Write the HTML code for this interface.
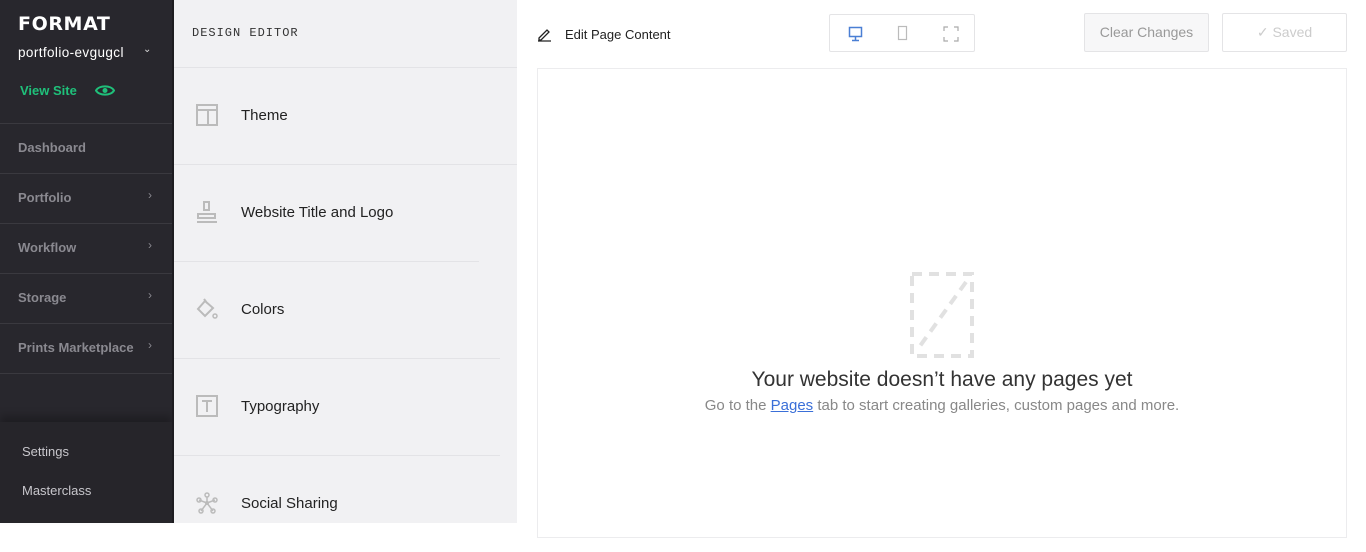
<!DOCTYPE html>
<html><head><style>
*{margin:0;padding:0;box-sizing:border-box}
body{width:1366px;height:523px;overflow:hidden;font-family:"Liberation Sans",sans-serif;background:#fff;position:relative}
.sb{position:absolute;left:0;top:0;width:172px;height:523px;background:#28272d}
.logo{position:absolute;left:18px;top:13px;color:#fff;font-family:"DejaVu Sans",sans-serif;font-weight:bold;font-size:19px;letter-spacing:0.6px}
.site{position:absolute;left:18px;top:45px;color:#fff;font-size:13.5px;letter-spacing:0.4px}
.chev{position:absolute;left:143px;top:44px;color:#ddd;font-size:10px}
.vs{position:absolute;left:20px;top:83px;color:#1fc07a;font-weight:bold;font-size:13px}
.mi{position:absolute;left:0;width:172px;height:50px;border-top:1px solid #3a393f;color:#8a8990;font-size:13px;font-weight:bold;padding:16px 18px}
.mi span{position:absolute;right:20px;top:14px;font-weight:normal;font-size:12px}
.bot{position:absolute;left:0;top:422px;width:172px;height:101px;background:#26252a;box-shadow:0 -6px 8px rgba(0,0,0,.25)}
.bot div{position:absolute;left:22px;color:#c8c7cc;font-size:13px}
.de{position:absolute;left:172px;top:0;width:345px;height:523px;background:#f1f1f3;border-left:2px solid #1d1c20}
.det{position:absolute;left:18px;top:26px;font-family:"Liberation Mono",monospace;font-size:12px;color:#333;letter-spacing:1px}
.row{position:absolute;left:0;width:343px;height:97px;border-top:1px solid #e3e3e6}
.row .t{position:absolute;left:67px;top:38px;font-size:15px;color:#222}
.row svg{position:absolute;left:22px;top:36px}
.top{position:absolute;font-size:13px;color:#222}
.btn{position:absolute;border:1px solid #e4e4e6;border-radius:2px;background:#fff}
.canvas{position:absolute;left:537px;top:68px;width:810px;height:470px;border:1px solid #ececee}
</style></head><body>
<div class="sb">
<div class="logo">FORMAT</div>
<div class="site">portfolio-evgugcl</div><div class="chev">&#8964;</div>
<div class="vs">View Site</div>
<svg style="position:absolute;left:95px;top:84px" width="20" height="13" viewBox="0 0 20 13"><path d="M1 6.5C4 1 16 1 19 6.5C16 12 4 12 1 6.5Z" fill="none" stroke="#1fc07a" stroke-width="2"/><circle cx="10" cy="6.5" r="2.5" fill="#1fc07a"/></svg>
<div class="mi" style="top:123px">Dashboard</div>
<div class="mi" style="top:173px">Portfolio<span>›</span></div>
<div class="mi" style="top:223px">Workflow<span>›</span></div>
<div class="mi" style="top:273px">Storage<span>›</span></div>
<div class="mi" style="top:323px">Prints Marketplace<span>›</span></div>
<div class="mi" style="top:373px;height:1px;padding:0"></div>
<div class="bot"><div style="top:22px">Settings</div><div style="top:61px">Masterclass</div></div>
</div>
<div class="de">
<div class="det">DESIGN EDITOR</div>
<div class="row" style="top:67px"><svg width="22" height="22"><rect x="1" y="1" width="20" height="20" fill="none" stroke="#bbb" stroke-width="2"/><path d="M1 6H21M12 6V21" stroke="#bbb" stroke-width="2"/></svg><div class="t" style="top:39px">Theme</div></div>
<div class="row" style="top:164px"><svg width="22" height="22"><path d="M8 1H13V9H8Z M2 13H19V17H2Z M1 21H21" fill="none" stroke="#bbb" stroke-width="2"/></svg><div class="t" style="top:39px">Website Title and Logo</div></div>
<div class="row" style="top:261px;width:305px"><svg width="22" height="22"><path d="M9 3L17 10L9 18L2 11Z M8 1L11 5" fill="none" stroke="#bbb" stroke-width="2"/><circle cx="19" cy="18" r="2" fill="none" stroke="#bbb" stroke-width="1.5"/></svg><div class="t" style="top:39px">Colors</div></div>
<div class="row" style="top:358px;width:326px"><svg width="22" height="22"><rect x="1" y="1" width="20" height="20" fill="none" stroke="#bbb" stroke-width="2"/><path d="M6 6H16M11 6V17" stroke="#bbb" stroke-width="2"/></svg><div class="t" style="top:39px">Typography</div></div>
<div class="row" style="top:455px;width:326px"><svg width="22" height="22"><circle cx="11" cy="11" r="2" fill="#bbb"/><g fill="none" stroke="#bbb" stroke-width="1.5"><circle cx="11" cy="3" r="2"/><circle cx="3" cy="8" r="2"/><circle cx="19" cy="8" r="2"/><circle cx="5" cy="19" r="2"/><circle cx="17" cy="19" r="2"/><path d="M11 5V11L3 8M11 11L19 8M11 11L5 19M11 11L17 19"/></g></svg><div class="t" style="top:39px">Social Sharing</div></div>
</div>
<svg style="position:absolute;left:537px;top:27px" width="15" height="15"><path d="M2 11L10 3L12 5L4 13H2Z M1 14H14" fill="none" stroke="#222" stroke-width="1.3"/></svg>
<div class="top" style="left:565px;top:27px">Edit Page Content</div>
<div class="btn" style="left:829px;top:14px;width:146px;height:38px">
<svg style="position:absolute;left:18px;top:11px" width="16" height="16"><rect x="1.5" y="1.5" width="12" height="9" fill="none" stroke="#4a7fd4" stroke-width="1.5"/><path d="M7.5 11V14M4 14.5H11" stroke="#4a7fd4" stroke-width="1.5"/></svg>
<svg style="position:absolute;left:67px;top:10px" width="12" height="17"><rect x="1.5" y="1.5" width="8" height="13" fill="none" stroke="#bbb" stroke-width="1.2"/></svg>
<svg style="position:absolute;left:113px;top:11px" width="16" height="16" stroke="#aaa" stroke-width="1.2" fill="none"><path d="M1 5V1H5M11 1H15V5M1 11V15H5M11 15H15V11"/></svg>
</div>
<div class="btn" style="left:1084px;top:13px;width:125px;height:39px;background:#f7f7f8;color:#999;font-size:14px;text-align:center;line-height:37px">Clear Changes</div>
<div class="btn" style="left:1222px;top:13px;width:125px;height:39px;color:#ccc;font-size:14px;text-align:center;line-height:37px">✓ Saved</div>
<div class="canvas"></div>
<svg style="position:absolute;left:910px;top:272px" width="64" height="86" fill="none" stroke="#e1e1e1" stroke-width="4" stroke-dasharray="10 7"><rect x="2" y="2" width="60" height="82"/><path d="M56 10L10 74"/></svg>
<div style="position:absolute;left:537px;width:810px;top:368px;text-align:center;font-size:21px;color:#333">Your website doesn’t have any pages yet</div>
<div style="position:absolute;left:537px;width:810px;top:397px;text-align:center;font-size:15px;color:#888">Go to the <span style="color:#3a6fd8;text-decoration:underline">Pages</span> tab to start creating galleries, custom pages and more.</div>
</body></html>
